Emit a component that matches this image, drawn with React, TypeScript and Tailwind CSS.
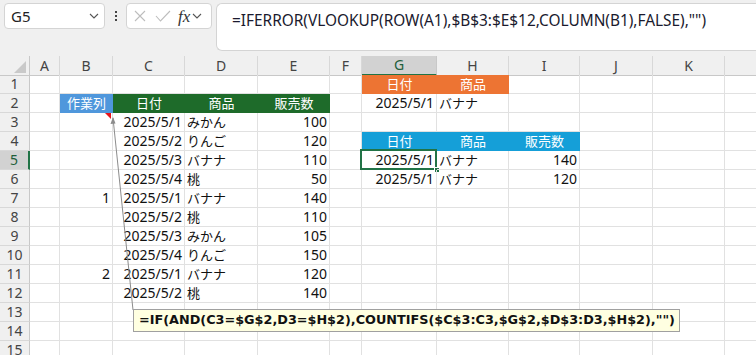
import React from "react";

type Cell = { t?: string; a?: "l" | "r" | "c"; bg?: string; jp?: boolean };

const cols = ["A", "B", "C", "D", "E", "F", "G", "H", "I", "J", "K", ""];
const colW = [30, 30, 53, 72, 73, 72, 32, 75, 72, 71, 73, 72, 40];

const GREEN = "bg-[#1e6b2a]";
const BLUE = "bg-[#4f97dc]";
const ORANGE = "bg-[#ed7433]";
const CYAN = "bg-[#159fd8]";

function mk(): Record<string, Cell> {
  const d: Record<string, Cell> = {};
  d["G1"] = { t: "日付", a: "c", bg: ORANGE, jp: true };
  d["H1"] = { t: "商品", a: "c", bg: ORANGE, jp: true };
  d["B2"] = { t: "作業列", a: "c", bg: BLUE, jp: true };
  d["C2"] = { t: "日付", a: "c", bg: GREEN, jp: true };
  d["D2"] = { t: "商品", a: "c", bg: GREEN, jp: true };
  d["E2"] = { t: "販売数", a: "c", bg: GREEN, jp: true };
  d["G2"] = { t: "2025/5/1", a: "r" };
  d["H2"] = { t: "バナナ", a: "l", jp: true };
  d["G4"] = { t: "日付", a: "c", bg: CYAN, jp: true };
  d["H4"] = { t: "商品", a: "c", bg: CYAN, jp: true };
  d["I4"] = { t: "販売数", a: "c", bg: CYAN, jp: true };
  d["G5"] = { t: "2025/5/1", a: "r" };
  d["H5"] = { t: "バナナ", a: "l", jp: true };
  d["I5"] = { t: "140", a: "r" };
  d["G6"] = { t: "2025/5/1", a: "r" };
  d["H6"] = { t: "バナナ", a: "l", jp: true };
  d["I6"] = { t: "120", a: "r" };
  const data: [number, string, string, string, string][] = [
    [3, "", "2025/5/1", "みかん", "100"],
    [4, "", "2025/5/2", "りんご", "120"],
    [5, "", "2025/5/3", "バナナ", "110"],
    [6, "", "2025/5/4", "桃", "50"],
    [7, "1", "2025/5/1", "バナナ", "140"],
    [8, "", "2025/5/2", "桃", "110"],
    [9, "", "2025/5/3", "みかん", "105"],
    [10, "", "2025/5/4", "りんご", "150"],
    [11, "2", "2025/5/1", "バナナ", "120"],
    [12, "", "2025/5/2", "桃", "140"],
  ];
  for (const [r, b, c, dd, e] of data) {
    if (b) d["B" + r] = { t: b, a: "r" };
    d["C" + r] = { t: c, a: "r" };
    d["D" + r] = { t: dd, a: "l", jp: true };
    d["E" + r] = { t: e, a: "r" };
  }
  return d;
}

const DATA = mk();

function Chevron({ className }: { className?: string }) {
  return (
    <svg width="10" height="6" viewBox="0 0 10 6" className={className}>
      <path d="M1 1 L5 5 L9 1" fill="none" stroke="#555" strokeWidth="1.1" />
    </svg>
  );
}

export default function App() {
  const rows = Array.from({ length: 15 }, (_, i) => i + 1);
  return (
    <div
      className="relative w-[756px] h-[355px] overflow-hidden bg-[#f0f0f0] text-[#1f1f1f]"
      style={{ fontFamily: '"Noto Sans", "Noto Sans CJK JP", sans-serif' }}
    >
      {/* Top bar */}
      <div className="flex items-start h-[56px] pt-[3px]">
        <div className="ml-[4px] w-[101px] h-[26px] bg-white border border-[#d4d4d4] rounded-[4px] flex items-center justify-between pl-[6px] pr-[5px]">
          <span className="text-[15px] leading-none text-[#222]">G5</span>
          <Chevron />
        </div>
        <div className="w-[21px] h-[26px] flex flex-col items-center justify-center gap-[2px]">
          <span className="w-[2px] h-[2px] bg-[#444]" />
          <span className="w-[2px] h-[2px] bg-[#444]" />
          <span className="w-[2px] h-[2px] bg-[#444]" />
        </div>
        <div className="w-[86px] h-[26px] bg-white border border-[#d4d4d4] rounded-[4px] flex items-center pl-[6px]">
          <svg width="14" height="14" viewBox="0 0 14 14">
            <path d="M2 2 L12 12 M12 2 L2 12" stroke="#bdbdbd" strokeWidth="1.1" fill="none" />
          </svg>
          <svg width="16" height="14" viewBox="0 0 16 14" className="ml-[8px]">
            <path d="M1 7 L5.5 12 L15 2" stroke="#bdbdbd" strokeWidth="1.1" fill="none" />
          </svg>
          <span
            className="ml-[7px] text-[17px] italic leading-none text-[#333]"
            style={{ fontFamily: '"Liberation Serif", serif' }}
          >
            fx
          </span>
          <Chevron className="ml-[2px]" />
        </div>
        <div className="ml-[4px] flex-1 h-[48px] bg-white border border-r-0 border-[#d4d4d4] rounded-l-[6px] pl-[15px] pt-[4px]">
          <span className="text-[15.4px] leading-[20px] text-[#1a1a2e]">
            =IFERROR(VLOOKUP(ROW(A1),$B$3:$E$12,COLUMN(B1),FALSE),"")
          </span>
        </div>
      </div>

      {/* Grid */}
      <div
        className="grid bg-white"
        style={{ gridTemplateColumns: colW.map((w) => w + "px").join(" "), gridAutoRows: "19px" }}
      >
        {/* header row */}
        <div className="relative h-[20px] bg-[#f0f0f0] border-b border-r border-[#c8c8c8]">
          <svg width="12" height="12" viewBox="0 0 12 12" className="absolute right-[3px] bottom-[2px]">
            <path d="M12 0 L12 12 L0 12 Z" fill="#c9c9c9" />
          </svg>
        </div>
        {cols.map((c, i) => (
          <div
            key={c + i}
            className={
              "h-[20px] flex items-center justify-center text-[14px] leading-none border-r " +
              (c === "G"
                ? "bg-[#d2d2d2] border-b-2 border-b-[#217346] border-r-[#c8c8c8] text-[#1f5e3a]"
                : "bg-[#f0f0f0] border-b border-b-[#c8c8c8] border-r-[#d8d8d8] text-[#444]")
            }
          >
            {c}
          </div>
        ))}
        {rows.map((r) => (
          <React.Fragment key={r}>
            <div
              className={
                "flex items-center justify-center text-[14px] leading-none border-b " +
                (r === 5
                  ? "bg-[#d2d2d2] border-r-2 border-r-[#217346] border-b-[#d8d8d8] text-[#1f5e3a]"
                  : "bg-[#f0f0f0] border-r border-r-[#c8c8c8] border-b-[#d8d8d8] text-[#444]")
              }
            >
              {r}
            </div>
            {cols.map((c, i) => {
              const cell = DATA[c + r];
              const bg = cell?.bg;
              const align =
                cell?.a === "r" ? "justify-end pr-[2px]" : cell?.a === "c" ? "justify-center" : "justify-start pl-[2px]";
              return (
                <div
                  key={c + i}
                  className={
                    "relative flex items-center overflow-visible whitespace-nowrap text-[14px] leading-none " +
                    align +
                    " " +
                    (bg ? bg + " text-white" : "border-r border-b border-[#e1e1e1] text-[#111]")
                  }
                >
                  {cell?.t && (
                    <span className={cell.jp ? "text-[13px]" : ""}>{cell.t}</span>
                  )}
                  {c === "G" && r === 5 && (
                    <>
                      <div className="absolute left-[-2px] top-[-2px] right-[-1px] bottom-[-1px] border-2 border-[#217346] pointer-events-none" />
                      <div className="absolute right-[-4px] bottom-[-4px] w-[6px] h-[6px] bg-[#217346] border border-white" />
                    </>
                  )}
                  {c === "B" && r === 3 && (
                    <svg width="6" height="6" viewBox="0 0 6 6" className="absolute right-[1px] top-0">
                      <path d="M0 0 L6 0 L6 6 Z" fill="#e8141b" />
                    </svg>
                  )}
                </div>
              );
            })}
          </React.Fragment>
        ))}
      </div>

      {/* comment connector */}
      <svg className="absolute left-0 top-0 pointer-events-none" width="756" height="355">
        <line x1="113" y1="118" x2="133" y2="310" stroke="#8c8c8c" strokeWidth="1" />
        <path d="M113 117 L110.5 124 L115.5 123.5 Z" fill="#8c8c8c" />
      </svg>

      {/* comment tooltip */}
      <div className="absolute left-[133px] top-[309px] w-[547px] h-[23px] bg-[#ffffe1] border border-[#a0a0a0] flex items-center pl-[5px]">
        <span
          className="font-bold leading-none text-[#111] whitespace-nowrap text-[12.8px]"
          style={{ fontFamily: '"DejaVu Sans", sans-serif' }}
        >
          =IF(AND(C3=$G$2,D3=$H$2),COUNTIFS($C$3:C3,$G$2,$D$3:D3,$H$2),"")
        </span>
      </div>
    </div>
  );
}
